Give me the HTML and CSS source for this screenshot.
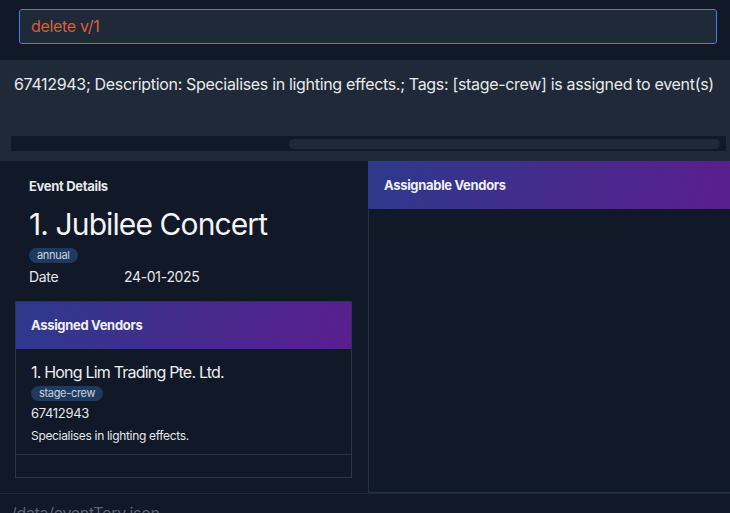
FILE: index.html
```html
<!DOCTYPE html>
<html>
<head>
<meta charset="utf-8">
<link rel="stylesheet" href="styles.css">
</head>
<body>
<div class="app">
  <div class="command">
    <div class="command-input">delete v/1</div>
  </div>
  <div class="result">
    <div class="result-text">67412943; Description: Specialises in lighting effects.; Tags: [stage-crew] is assigned to event(s)</div>
    <div class="hscroll"><div class="hthumb"></div></div>
  </div>
  <div class="main">
    <div class="left">
      <div class="event">
        <div class="section-label">Event Details</div>
        <div class="event-title">1. Jubilee Concert</div>
        <div class="tags"><span class="tag">annual</span></div>
        <div class="date-row"><span class="date-label">Date</span><span class="date-value">24-01-2025</span></div>
      </div>
      <div class="card">
        <div class="card-header">Assigned Vendors</div>
        <div class="card-list">
          <div class="vendor">
            <div class="vendor-name">1. Hong Lim Trading Pte. Ltd.</div>
            <div class="tags"><span class="tag">stage-crew</span></div>
            <div class="vendor-phone">67412943</div>
            <div class="vendor-desc">Specialises in lighting effects.</div>
          </div>
        </div>
      </div>
    </div>
    <div class="right">
      <div class="card-header wide">Assignable Vendors</div>
      <div class="right-body"></div>
    </div>
  </div>
  <div class="status">/data/eventTory.json</div>
</div>
</body>
</html>
```
FILE: styles.css
```css
html, body {
  margin: 0;
  padding: 0;
}
body {
  background: #111827;
  font-family: Inter, "Noto Sans", sans-serif;
  color: #e5e7eb;
  letter-spacing: -0.02em;
  width: 730px;
  height: 513px;
  overflow: hidden;
}
.app {
  display: flex;
  flex-direction: column;
  height: 513px;
  overflow: hidden;
}
.app > * {
  flex: none;
}
.command {
  padding: 9px 13px 16px 19px;
  height: 35px;
}
.command-input {
  box-sizing: border-box;
  height: 35px;
  border: 1px solid #3b7fe8;
  border-radius: 3px;
  background: #1f2937;
  color: #dc5c3f;
  font-size: 16px;
  line-height: 33px;
  padding-left: 11px;
}
.result {
  background: #1f2937;
  height: 101px;
  box-sizing: border-box;
  padding: 13px 4px 0 11px;
  display: flex;
  flex-direction: column;
}
.result-text {
  font-size: 16px;
  line-height: 22px;
  padding-left: 3px;
  white-space: nowrap;
  overflow: hidden;
  color: #e8eaee;
}
.hscroll {
  margin-top: 41px;
  height: 15px;
  background: #111827;
  display: flex;
  align-items: center;
  justify-content: flex-end;
  padding-right: 6px;
}
.hthumb {
  width: 431px;
  height: 10px;
  border-radius: 5px;
  background: #1f2937;
}
.main {
  display: flex;
  height: 332px;
}
.left {
  width: 368px;
  box-sizing: border-box;
  padding: 0 16px 0 15px;
}
.event {
  padding: 16px 0 0 14px;
  height: 140px;
  box-sizing: border-box;
}
.section-label {
  font-weight: 700;
  font-size: 13px;
  line-height: 18px;
  color: #e5e7eb;
}
.event-title {
  font-size: 30px;
  line-height: 40px;
  margin-top: 9px;
  letter-spacing: -0.03em;
  color: #f3f4f6;
}
.tags {
  display: flex;
  height: 16px;
  align-items: center;
}
.event .tags {
  margin-top: 3px;
}
.tag {
  background: #1e3a5f;
  color: #cbd5e1;
  font-size: 11px;
  line-height: 15px;
  padding: 0 8px;
  border-radius: 8px;
}
.date-row {
  display: flex;
  font-size: 14px;
  line-height: 20px;
  margin-top: 4px;
}
.date-label {
  width: 95px;
}
.card {
  border: 1px solid #2b3544;
  height: 177px;
  box-sizing: border-box;
  display: flex;
  flex-direction: column;
}
.card-header {
  height: 47px;
  flex: none;
  background: linear-gradient(110deg, #2c3a8c 0%, #472a8c 55%, #5a1e8e 100%);
  color: #eef0f6;
  font-weight: 700;
  font-size: 13px;
  line-height: 47px;
  padding-left: 15px;
}
.card-list {
  flex: 1;
}
.vendor {
  padding: 12px 0 0 15px;
  height: 106px;
  box-sizing: border-box;
  border-bottom: 1px solid #263040;
}
.vendor-name {
  font-size: 16px;
  line-height: 22px;
  letter-spacing: -0.05em;
  color: #eceef2;
}
.vendor .tags {
  margin-top: 2px;
}
.vendor-phone {
  font-size: 13px;
  line-height: 18px;
  margin-top: 3px;
}
.vendor-desc {
  font-size: 12px;
  line-height: 17px;
  margin-top: 5px;
}
.right {
  flex: 1;
  display: flex;
  flex-direction: column;
}
.card-header.wide {
  height: 48px;
  line-height: 48px;
  padding-left: 16px;
}
.right-body {
  flex: 1;
  border-left: 1px solid #243040;
  border-bottom: 2px solid #243040;
  border-bottom-left-radius: 3px;
  margin-bottom: -1px;
}
.status {
  border-top: 1px solid #1f2b38;
  font-size: 16px;
  line-height: 20px;
  padding: 9px 0 0 11px;
  color: #5b6472;
}
```
